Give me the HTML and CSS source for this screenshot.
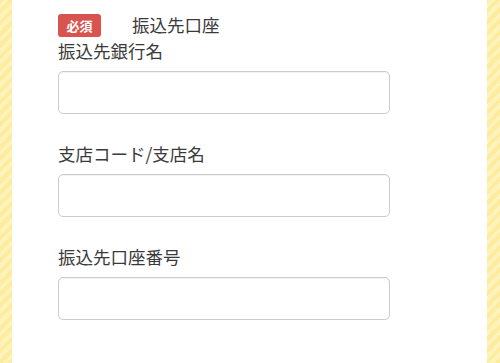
FILE: index.html
```html
<!DOCTYPE html>
<html>
<head>
<meta name="viewport" content="width=device-width, initial-scale=1">
<title>振込先口座</title>
<link rel="stylesheet" href="styles.css">
</head>
<body>
<div class="stripe-bg">
   <div class="panel">
      <!-- heading -->
      <div class="form-head">
         <span class="required">必須</span>
         <span class="head-title">振込先口座</span>
      </div>

      <div class="field">
         <label class="field-label">振込先銀行名</label>
         <input class="field-input" type="text">
      </div>

      <div class="field">
         <label class="field-label">支店コード/支店名</label>
         <input class="field-input" type="text">
      </div>

      <div class="field">
         <label class="field-label">振込先口座番号</label>
         <input class="field-input" type="text">
      </div>
   </div>
</div>
</body>
</html>
```

FILE: styles.css
```css
html,
body {
   margin: 0;
   padding: 0;
   height: 100%;
   overflow: hidden;
   font-family: "Noto Sans CJK JP", "Noto Sans", sans-serif;
   color: #3a3a3a;
}

.stripe-bg {
   height: 100%;
   padding: 0 13px 0 12px;
   background: repeating-linear-gradient(-45deg, #fdec9c 0, #fdec9c 4px, #fff3bd 4px, #fff3bd 8px);
}

.panel {
   height: 100%;
   background: #fff;
   padding: 12px 0 0 46px;
   box-sizing: border-box;
}

.form-head {
   display: flex;
   align-items: center;
   height: 26px;
}

.required {
   display: inline-block;
   width: 43px;
   height: 23px;
   line-height: 23px;
   text-align: center;
   background: #d9534f;
   color: #fff;
   font-size: 13px;
   font-weight: bold;
   border-radius: 3px;
   margin-right: 31px;
}

.head-title {
   font-size: 17.5px;
   line-height: 26px;
}

.field {
   margin-bottom: 27px;
}

.field-label {
   display: block;
   font-size: 17.5px;
   line-height: 26px;
   margin-bottom: 7px;
}

.field-input {
   display: block;
   width: 332px;
   height: 43px;
   box-sizing: border-box;
   border: 1px solid #ccc;
   border-radius: 5px;
   box-shadow: inset 0 1px 1px rgba(0, 0, 0, 0.05);
   margin: 0;
   padding: 6px 12px;
   font-size: 16px;
}
```
